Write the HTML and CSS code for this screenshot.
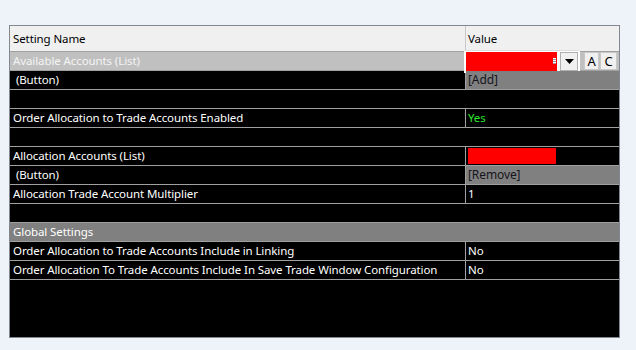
FILE: index.html
```html
<!DOCTYPE html>
<html lang="en">

<head>
    <meta charset="UTF-8">
    <title>Settings</title>
    <link rel="stylesheet" href="styles.css">
</head>

<body>
    <div class="grid">
        <div class="row header">
            <div class="name">Setting Name</div>
            <div class="value">Value</div>
        </div>

        <div class="row list">
            <div class="name">Available Accounts (List)</div>
            <div class="value">
                <div class="combo">
                    <div class="combo-field"><span class="grip"></span></div>
                    <div class="combo-drop">
                        <svg width="9" height="5" viewBox="0 0 9 5"><path d="M0 0h9L4.5 5z" fill="#000"/></svg>
                    </div>
                </div>
                <div class="mini-btn btn-a">A</div>
                <div class="mini-btn btn-c">C</div>
            </div>
        </div>

        <div class="row">
            <div class="name">&nbsp;(Button)</div>
            <div class="value action">[Add]</div>
        </div>

        <div class="row blank"></div>

        <div class="row">
            <div class="name">Order Allocation to Trade Accounts Enabled</div>
            <div class="value yes">Yes</div>
        </div>

        <div class="row blank"></div>

        <div class="row">
            <div class="name">Allocation Accounts (List)</div>
            <div class="value"><div class="red-box"></div></div>
        </div>

        <div class="row">
            <div class="name">&nbsp;(Button)</div>
            <div class="value action">[Remove]</div>
        </div>

        <div class="row">
            <div class="name">Allocation Trade Account Multiplier</div>
            <div class="value">1</div>
        </div>

        <div class="row blank"></div>

        <div class="row group">
            <div class="name">Global Settings</div>
        </div>

        <div class="row">
            <div class="name">Order Allocation to Trade Accounts Include in Linking</div>
            <div class="value">No</div>
        </div>

        <div class="row">
            <div class="name">Order Allocation To Trade Accounts Include In Save Trade Window Configuration</div>
            <div class="value">No</div>
        </div>
    </div>
</body>

</html>
```

FILE: styles.css
```css
body {
    margin: 0;
    background-color: #eef2f9;
    font-family: "Noto Sans", "Open Sans", sans-serif;
    font-size: 11.5px;
    letter-spacing: -0.1px;
}

.grid {
    margin: 25px 0 0 9px;
    width: 611px;
    height: 313px;
    box-sizing: border-box;
    border: 1px solid #828790;
    background-color: #000;
    color: #fff;
}

.row {
    display: flex;
    height: 19px;
    box-sizing: border-box;
    border-bottom: 1px solid #a0a0a0;
    line-height: 18px;
    white-space: nowrap;
}

.name {
    width: 456px;
    padding-left: 3px;
    box-sizing: border-box;
    border-right: 1px solid #a0a0a0;
    overflow: hidden;
}

.value {
    flex: 1;
    padding-left: 2px;
    position: relative;
}

.header {
    height: 26px;
    line-height: 25px;
    background-color: #f0f0f0;
    color: #000;
}

.header .name {
    border-right-color: #c8c8c8;
}

.list {
    background-color: #c0c0c0;
    color: #f4f4f4;
}

.group {
    background-color: #808080;
    color: #fff;
}

.group .name {
    width: 100%;
    border-right: none;
}

.action {
    background-color: #808080;
    color: #15151c;
    font-size: 12px;
}

.yes {
    color: #2ee62e;
}

.red-box {
    width: 88px;
    height: 16px;
    margin-top: 1px;
    background-color: #f00;
}

.combo {
    position: absolute;
    left: -2px;
    top: -2px;
    width: 116px;
    height: 23px;
    box-sizing: border-box;
    border: 1px solid #fff;
    border-top-color: #ddd;
    display: flex;
    padding: 1px;
    background-color: #fff;
}

.combo-field {
    flex: 1;
    background-color: #f00;
    position: relative;
}

.grip {
    position: absolute;
    right: 1px;
    top: 6px;
    width: 3px;
    height: 6px;
    background: repeating-linear-gradient(#fff 0 1px, #99a 1px 2px);
}

.combo-drop {
    width: 18px;
    margin-left: 3px;
    background-color: #f0f0f0;
    border: 1px solid #b0b0b0;
    box-sizing: border-box;
    display: flex;
    align-items: center;
    justify-content: center;
}

.mini-btn {
    position: absolute;
    top: 0;
    height: 18px;
    box-sizing: border-box;
    background-color: #f0f0f0;
    border: 1px solid #c8c8c8;
    color: #000;
    text-align: center;
    line-height: 16px;
    font-size: 13px;
}

.btn-a {
    left: 118px;
    width: 15px;
}

.btn-c {
    left: 134px;
    width: 17px;
}
```
